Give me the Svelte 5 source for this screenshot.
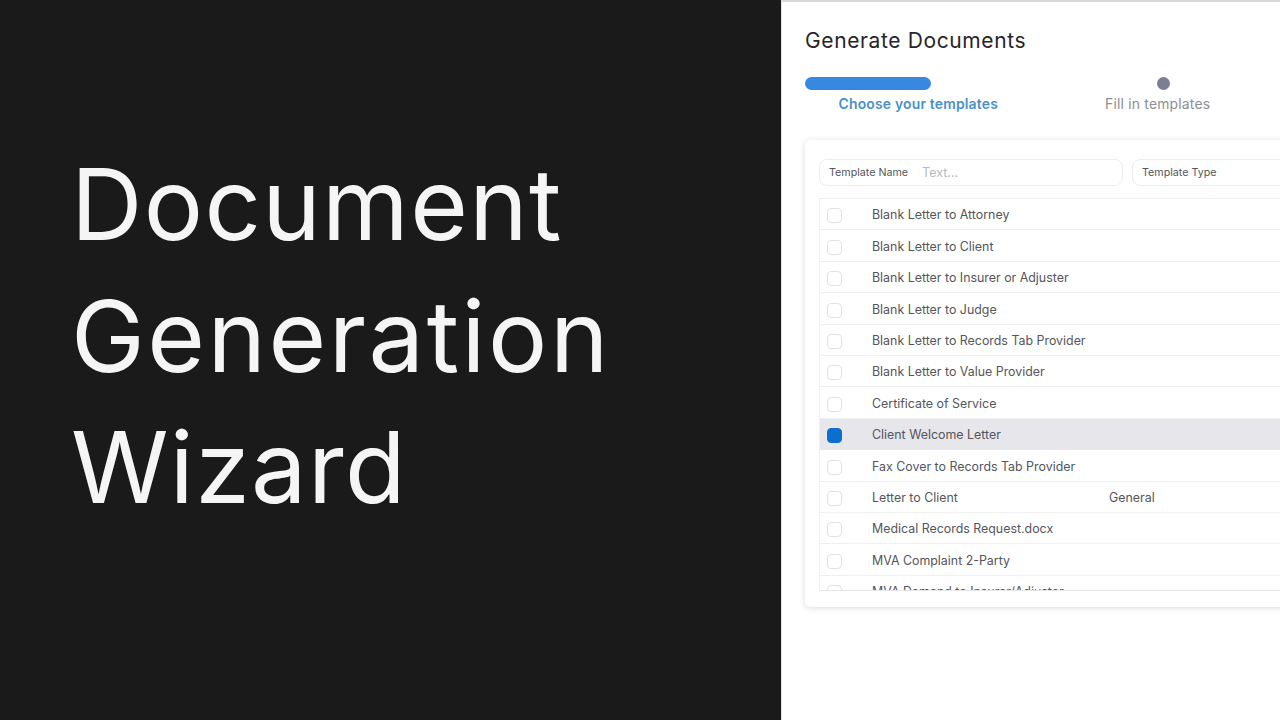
<script>
  const rows = [
    { name: "Blank Letter to Attorney" },
    { name: "Blank Letter to Client" },
    { name: "Blank Letter to Insurer or Adjuster" },
    { name: "Blank Letter to Judge" },
    { name: "Blank Letter to Records Tab Provider" },
    { name: "Blank Letter to Value Provider" },
    { name: "Certificate of Service" },
    { name: "Client Welcome Letter", selected: true },
    { name: "Fax Cover to Records Tab Provider" },
    { name: "Letter to Client", type: "General" },
    { name: "Medical Records Request.docx" },
    { name: "MVA Complaint 2-Party" },
    { name: "MVA Demand to Insurer/Adjuster" }
  ];
</script>

<div class="page">
  <section class="intro">
    <h1>Document<br /><span class="wide">Generation</span><br />Wizard</h1>
  </section>

  <section class="panel">
    <h2>Generate Documents</h2>

    <div class="steps">
      <div class="step first">
        <div class="bar"></div>
        <div class="step-label active">Choose your templates</div>
      </div>
      <div class="step second">
        <div class="dot"></div>
        <div class="step-label">Fill in templates</div>
      </div>
    </div>

    <div class="card">
      <div class="filters">
        <div class="filter name">
          <span class="filter-label">Template Name</span>
          <span class="placeholder">Text...</span>
        </div>
        <div class="filter type">
          <span class="filter-label">Template Type</span>
        </div>
      </div>

      <div class="table">
        {#each rows as row}
          <div class="row" class:selected={row.selected}>
            <span class="check"></span>
            <span class="name-cell">{row.name}</span>
            <span class="type-cell">{row.type ?? ""}</span>
          </div>
        {/each}
      </div>
    </div>
  </section>
</div>

<style>
  :global(body) {
    margin: 0;
    overflow: hidden;
  }
  .page {
    width: 1280px;
    height: 720px;
    display: flex;
    overflow: hidden;
    font-family: "Inter", "Liberation Sans", sans-serif;
  }
  .intro {
    width: 781px;
    flex: none;
    box-sizing: border-box;
    background: #1a1a1a;
    padding: 139px 0 0 71px;
  }
  h1 {
    margin: 0;
    font-size: 99px;
    line-height: 131.5px;
    font-weight: 400;
    letter-spacing: 1.3px;
    color: #f5f5f5;
  }
  .wide {
    letter-spacing: 2.5px;
  }
  .panel {
    flex: 1;
    min-width: 0;
    box-sizing: border-box;
    background: #fff;
    border-top: 2px solid #d9d9dc;
    border-left: 1px solid #e2e2e4;
    padding: 0 0 0 23px;
    overflow: hidden;
  }
  h2 {
    margin: 24px 0 0;
    font-size: 21px;
    line-height: 30px;
    font-weight: 400;
    letter-spacing: 0.62px;
    color: #26262a;
  }
  .steps {
    display: flex;
    margin-top: 21px;
    height: 63px;
  }
  .step {
    display: flex;
    flex-direction: column;
    flex: none;
  }
  .first {
    width: 240px;
  }
  .second {
    width: 200px;
    padding-left: 60px;
  }
  .bar {
    width: 126px;
    height: 13px;
    border-radius: 7px;
    background: #3688e0;
  }
  .dot {
    width: 13px;
    height: 13px;
    border-radius: 50%;
    background: #7a7f95;
    margin-left: 52px;
  }
  .step-label {
    margin-top: 4px;
    line-height: 20px;
    color: #8e8e93;
    letter-spacing: 0.2px;
    white-space: nowrap;
    font-size: 13.9px;
  }
  .first .step-label {
    margin-left: 33.5px;
  }
  .active {
    color: #4a90c8;
    font-weight: 600;
  }
  .card {
    width: 520px;
    height: 467px;
    box-sizing: border-box;
    padding: 19px 0 0 14px;
    border-radius: 5px 0 0 5px;
    box-shadow: 0 1px 6px rgba(40, 40, 60, 0.16);
    overflow: hidden;
  }
  .filters {
    display: flex;
    gap: 9px;
  }
  .filter {
    height: 27px;
    box-sizing: border-box;
    border: 1px solid #ececef;
    border-radius: 8px;
    display: flex;
    align-items: center;
    padding-left: 9px;
    flex: none;
    font-size: 10.7px;
    color: #55555b;
  }
  .name {
    width: 304px;
  }
  .type {
    width: 200px;
  }
  .placeholder {
    margin-left: 14px;
    color: #b9b9bd;
    font-size: 12.5px;
  }
  .table {
    margin-top: 12px;
    height: 393px;
    border: 1px solid #efeff1;
    border-bottom-color: #e6e6e8;
    overflow: hidden;
    box-sizing: border-box;
  }
  .row {
    height: 31.4px;
    box-sizing: border-box;
    padding-top: 1.5px;
    border-bottom: 1px solid #efeff1;
    display: grid;
    grid-template-columns: 52px 237px 1fr;
    align-items: center;
    font-size: 12.4px;
    color: #55555b;
  }
  .row.selected {
    background: #e6e6eb;
    border-bottom-color: #e6e6eb;
  }
  .check {
    width: 15px;
    height: 15px;
    box-sizing: border-box;
    margin: 2px 0 0 7px;
    border: 1px solid #e2e2e5;
    border-radius: 4px;
    background: #fff;
  }
  .selected .check {
    background: #0c6fd0;
    border-color: #0c6fd0;
  }
  .name-cell,
  .type-cell {
    white-space: nowrap;
  }
</style>
